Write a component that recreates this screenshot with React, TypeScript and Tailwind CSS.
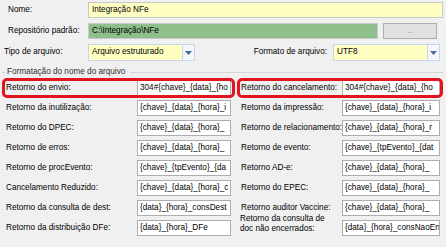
import React from 'react';

const leftRows = [
  { label: 'Retorno do envio:', value: '304#{chave}_{data}_{ho' },
  { label: 'Retorno da inutilização:', value: '{chave}_{data}_{hora}_i' },
  { label: 'Retorno do DPEC:', value: '{chave}_{data}_{hora}_' },
  { label: 'Retorno de erros:', value: '{chave}_{data}_{hora}_' },
  { label: 'Retorno de procEvento:', value: '{chave}_{tpEvento}_{da' },
  { label: 'Cancelamento Reduzido:', value: '{chave}_{data}_{hora}_c' },
  { label: 'Retorno da consulta de dest:', value: '{data}_{hora}_consDest' },
  { label: 'Retorno da distribuição DFe:', value: '{data}_{hora}_DFe' },
];

const rightRows = [
  { label: 'Retorno do cancelamento:', value: '304#{chave}_{data}_{ho' },
  { label: 'Retorno da impressão:', value: '{chave}_{data}_{hora}_i' },
  { label: 'Retorno de relacionamento:', value: '{chave}_{data}_{hora}_r' },
  { label: 'Retorno de evento:', value: '{chave}_{tpEvento}_{dat' },
  { label: 'Retorno AD-e:', value: '{chave}_{data}_{hora}_' },
  { label: 'Retorno do EPEC:', value: '{chave}_{data}_{hora}_' },
  { label: 'Retorno auditor Vaccine:', value: '{chave}_{data}_{hora}_' },
  { label: 'Retorno da consulta de doc não encerrados:', value: '{data}_{hora}_consNaoEn' },
];

const Arrow: React.FC = () => (
  <div className="w-[12px] h-full flex items-center justify-center bg-[#f3f6fb] border-l border-[#c5d5ea]">
    <svg width="7" height="4" viewBox="0 0 7 4">
      <path d="M0 0h7L3.5 4z" fill="#4a6a96" />
    </svg>
  </div>
);

const Field: React.FC<{ value: string; width: string }> = ({ value, width }) => (
  <div className={`${width} h-[16px] bg-white border border-[#abadb3] flex items-center pl-[2px] overflow-hidden whitespace-nowrap`}>
    {value}
  </div>
);

export default function App() {
  return (
    <div
      className="w-[446px] h-[247px] bg-[#f0f0f0] overflow-hidden text-[8.2px] text-black"
      style={{ fontFamily: '"Liberation Sans", Arial, sans-serif' }}
    >
      <div className="pt-[2px]">
        <div className="flex items-center h-[16px]">
          <div className="w-[88px] pl-[8px]">Nome:</div>
          <div className="w-[355px] h-[16px] bg-[#ffffc4] border border-[#c9c9c9] flex items-center pl-[3px]">
            Integração NFe
          </div>
        </div>
        <div className="flex items-center h-[16px] mt-[5px]">
          <div className="w-[88px] pl-[8px]">Repositório padrão:</div>
          <div className="w-[290px] h-[16px] bg-[#8fbf8b] border border-[#c9c9c9] flex items-center pl-[3px]">
            C:\Integração\NFe
          </div>
          <div className="ml-[5px] w-[54px] h-[16px] bg-[#e1e1e1] border border-[#adadad] flex items-center justify-center text-[#707070] text-[7px]">
            ...
          </div>
        </div>
        <div className="flex items-center h-[17px] mt-[5px]">
          <div className="w-[88px] pl-[4px]">Tipo de arquivo:</div>
          <div className="w-[107px] h-[17px] bg-[#ffffc4] border border-[#c5d5ea] flex items-center">
            <div className="flex-1 pl-[3px]">Arquivo estruturado</div>
            <Arrow />
          </div>
          <div className="flex-1 text-right pr-[6px]">Formato de arquivo:</div>
          <div className="w-[107px] h-[17px] bg-[#ffffc4] border border-[#c5d5ea] flex items-center mr-[6px]">
            <div className="flex-1 pl-[3px]">UTF8</div>
            <Arrow />
          </div>
        </div>
      </div>

      <div className="flex items-center mt-[6px] ml-[2px] mr-[3px] h-[10px] text-[#2f2f2f]">
        <div className="w-[4px] h-px bg-[#d5d5d5]" />
        <div className="px-[1px]">Formatação do nome do arquivo</div>
        <div className="flex-1 h-px bg-[#d5d5d5] ml-[4px]" />
      </div>

      <div className="flex mt-[3px] ml-[2px]">
        <div className="w-[233px] flex flex-col gap-[4px]">
          {leftRows.map((r, i) => (
            <div key={r.label} className="relative flex items-center h-[16px]">
              <div className="w-[135px] pl-[4px] whitespace-nowrap">{r.label}</div>
              <Field value={r.value} width="w-[94px]" />
              {i === 0 && (
                <div className="absolute inset-x-0 -inset-y-[2px] border-[3px] border-[#e3141e] rounded-[5px]" />
              )}
            </div>
          ))}
        </div>
        <div className="ml-[2px] w-[206px] flex flex-col gap-[4px]">
          {rightRows.map((r, i) => (
            <div key={r.label} className="relative flex items-center h-[16px]">
              {i === 7 ? (
                <div className="w-[105px] pl-[3px] leading-[10px] -mt-[9px]">
                  Retorno da consulta de
                  <br />
                  doc não encerrados:
                </div>
              ) : (
                <div className="w-[105px] pl-[4px] whitespace-nowrap">{r.label}</div>
              )}
              <Field value={r.value} width="w-[98px]" />
              {i === 0 && (
                <div className="absolute inset-x-0 -inset-y-[2px] border-[3px] border-[#e3141e] rounded-[5px]" />
              )}
            </div>
          ))}
        </div>
      </div>
    </div>
  );
}
